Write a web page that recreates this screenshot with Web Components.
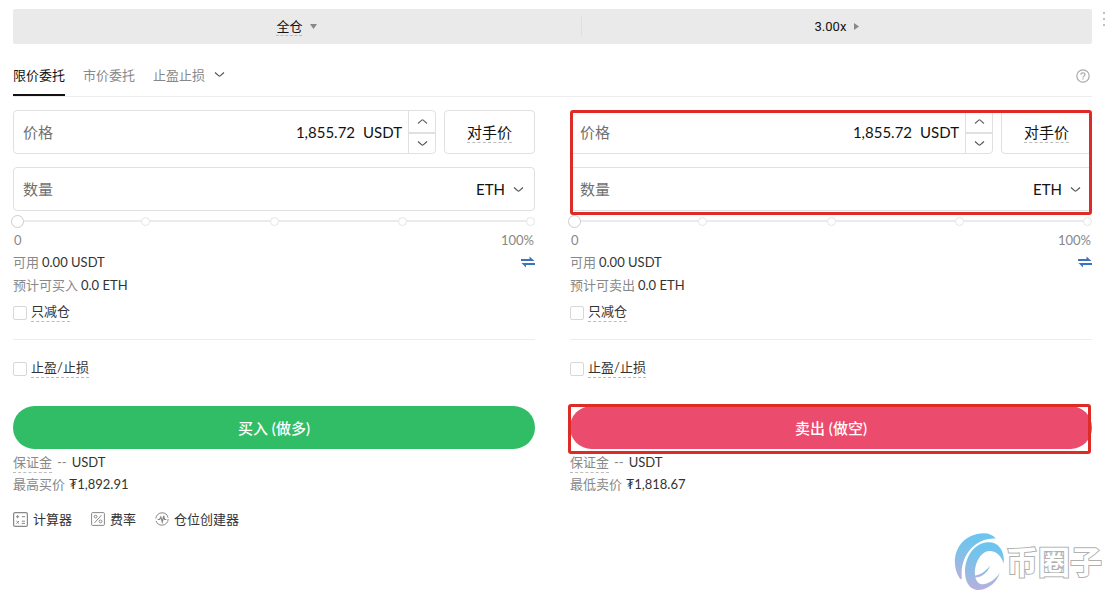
<!DOCTYPE html>
<html lang="zh-CN">
<head>
<meta charset="utf-8">
<title>限价委托</title>
<style>
body {
  margin: 0;
  min-height: 100vh;
  background: #fff;
  color: #121212;
  font-family: Lato, "Noto Sans CJK SC", sans-serif;
  font-size: 13px;
  line-height: 22px;
}
</style>
</head>
<body>
<trade-panel></trade-panel>

<script>
const baseStyle = `
* { box-sizing: border-box; }
button, input, select {
  margin: 0;
  padding: 0;
  border: 0;
  background: none;
  color: inherit;
  font: inherit;
  outline: none;
}
button, select { cursor: pointer; }
svg { display: block; flex: none; }
a { color: inherit; text-decoration: none; }
`;

const chevronDown = `<svg width="11" height="7" viewBox="0 0 11 7" fill="none" stroke="#555" stroke-width="1.2"><path d="M1 1.5L4.8 4.9Q5.5 5.5 6.2 4.9L10 1.5"/></svg>`;
const chevronUp = `<svg width="11" height="7" viewBox="0 0 11 7" fill="none" stroke="#666" stroke-width="1.2"><path d="M1 5.5L4.8 2.1Q5.5 1.5 6.2 2.1L10 5.5"/></svg>`;

// Red frame drawn over whatever is slotted in
class MarkFrame extends HTMLElement {
  constructor() {
    super();
    this.attachShadow({ mode: "open" });
  }

  connectedCallback() {
    this.shadowRoot.innerHTML = `
<style>
:host { display: block; position: relative; }
.frame {
  position: absolute;
  inset: var(--frame-inset, 0);
  border: 3px solid #dd2c26;
  border-radius: 3px;
  pointer-events: none;
}
</style>
<slot></slot>
<div class="frame"></div>
`;
  }
}

class MarginBar extends HTMLElement {
  constructor() {
    super();
    this.attachShadow({ mode: "open" });
  }

  connectedCallback() {
    this.shadowRoot.innerHTML = `
<style>
${baseStyle}
:host {
  display: grid;
  grid-template-columns: 10fr 9fr;
  padding: 8px 0 10px;
  height: 35px;
  background: #eaeaea;
  border-radius: 2px;
}
button {
  display: flex;
  align-items: center;
  justify-content: center;
  gap: 8px;
  line-height: 17px;
}
button + button { border-left: 1px solid #dfdfdf; font-family: Roboto, sans-serif; }
.mode { border-bottom: 1px dashed #bbb; line-height: 18px; }
</style>
<button type="button"><span class="mode">全仓</span><svg width="7" height="5" viewBox="0 0 7 5"><path d="M0 0H7L3.5 5Z" fill="#888"/></svg></button>
<button type="button"><span>3.00x</span><svg width="5" height="7" viewBox="0 0 5 7"><path d="M0 0L5 3.5L0 7Z" fill="#888"/></svg></button>
`;
  }
}

class OrderTabs extends HTMLElement {
  constructor() {
    super();
    this.attachShadow({ mode: "open" });
  }

  connectedCallback() {
    this.shadowRoot.innerHTML = `
<style>
${baseStyle}
:host {
  display: flex;
  align-items: stretch;
  gap: 18px;
  height: 42px;
  border-bottom: 1px solid #ededed;
}
button {
  display: flex;
  align-items: center;
  gap: 9px;
  padding-bottom: 2px;
  color: #888;
}
.active {
  color: #121212;
  box-shadow: inset 0 -2px #121212;
}
.help { margin-left: auto; padding: 0 2px 0 0; }
</style>
<button type="button" class="active">限价委托</button>
<button type="button">市价委托</button>
<button type="button">止盈止损 ${chevronDown}</button>
<button type="button" class="help" aria-label="帮助">
  <svg width="14" height="14" viewBox="0 0 14 14" fill="none" stroke="#aaa" stroke-width="1.2"><circle cx="7" cy="7" r="6.2"/><path d="M5 5.7C5 3.3 9 3.3 9 5.6C9 7 7 6.9 7 8.4M7 9.3V10.5"/></svg>
</button>
`;
  }
}

class PriceField extends HTMLElement {
  constructor() {
    super();
    this.attachShadow({ mode: "open" });
  }

  connectedCallback() {
    this.shadowRoot.innerHTML = `
<style>
${baseStyle}
:host { display: flex; gap: 8px; height: 44px; font-size: 15px; }
.box {
  flex: 1;
  min-width: 0;
  display: flex;
  align-items: center;
  border: 1px solid #e0e0e0;
  border-radius: 4px;
}
label { padding-left: 9px; color: #707070; }
input { flex: 1; min-width: 0; text-align: right; padding-right: 8px; }
.unit { padding-right: 6px; }
.steps {
  align-self: stretch;
  display: grid;
  grid-template-rows: 1fr 1fr;
  width: 27px;
  border-left: 1px solid #e0e0e0;
}
.steps button { display: grid; place-items: center; }
.steps button + button { border-top: 2px solid #e0e0e0; }
.match {
  width: 91px;
  border: 1px solid #e0e0e0;
  border-radius: 4px;
}
.match span { display: inline-block; line-height: 20px; border-bottom: 1px dashed #bbb; }
</style>
<div class="box">
  <label for="price">价格</label>
  <input id="price" type="text" value="${this.getAttribute("value")}">
  <span class="unit">USDT</span>
  <div class="steps">
    <button type="button" aria-label="增加">${chevronUp}</button>
    <button type="button" aria-label="减少">${chevronDown}</button>
  </div>
</div>
<button type="button" class="match"><span>对手价</span></button>
`;
  }
}

class AmountField extends HTMLElement {
  constructor() {
    super();
    this.attachShadow({ mode: "open" });
  }

  connectedCallback() {
    this.shadowRoot.innerHTML = `
<style>
${baseStyle}
:host {
  display: flex;
  align-items: center;
  height: 44px;
  padding: 0 10px 0 9px;
  border: 1px solid #e0e0e0;
  border-radius: 4px;
  font-size: 15px;
}
input { flex: 1; min-width: 0; }
input::placeholder { color: #707070; opacity: 1; }
select { appearance: none; padding-right: 8px; }
</style>
<input type="text" placeholder="数量" aria-label="数量">
<select aria-label="单位"><option>ETH</option></select>
${chevronDown}
`;
  }
}

class PercentSlider extends HTMLElement {
  constructor() {
    super();
    this.attachShadow({ mode: "open" });
  }

  connectedCallback() {
    this.shadowRoot.innerHTML = `
<style>
${baseStyle}
:host { display: block; color: #888; line-height: 19px; }
.track { display: grid; height: 20px; align-items: center; }
.track > * { grid-area: 1 / 1; }
.dots {
  display: flex;
  justify-content: space-between;
  background: linear-gradient(#ebebeb, #ebebeb) center / 100% 2px no-repeat;
}
.dots i {
  width: 9px;
  height: 9px;
  background: #fff;
  border: 1px solid #e6e6e6;
  border-radius: 50%;
}
input { appearance: none; height: 13px; margin: 0 -2px; }
input::-webkit-slider-thumb {
  appearance: none;
  width: 13px;
  height: 13px;
  background: #fff;
  border: 1px solid #ccc;
  border-radius: 50%;
}
.scale { display: flex; justify-content: space-between; padding: 0 1px; }
</style>
<div class="track">
  <div class="dots"><i></i><i></i><i></i><i></i><i></i></div>
  <input type="range" min="0" max="100" value="0" aria-label="比例">
</div>
<div class="scale"><span>0</span><span>100%</span></div>
`;
  }
}

class CheckOption extends HTMLElement {
  constructor() {
    super();
    this.attachShadow({ mode: "open" });
  }

  connectedCallback() {
    this.shadowRoot.innerHTML = `
<style>
${baseStyle}
:host { display: flex; }
label { display: flex; align-items: flex-end; gap: 4px; color: #333; }
input {
  appearance: none;
  width: 14px;
  height: 14px;
  margin-bottom: 2px;
  border: 1px solid #d8d8d8;
  border-radius: 2px;
}
span { border-bottom: 1px dashed #bbb; line-height: 20px; }
</style>
<label><input type="checkbox"><span><slot></slot></span></label>
`;
  }
}

class OrderForm extends HTMLElement {
  constructor() {
    super();
    this.attachShadow({ mode: "open" });
  }

  connectedCallback() {
    const fields = `
<div class="fields">
  <price-field value="1,855.72"></price-field>
  <amount-field></amount-field>
</div>`;
    const submit = `<button type="submit" class="submit">${this.getAttribute("action")}</button>`;
    const marked = this.hasAttribute("marked");

    this.shadowRoot.innerHTML = `
<style>
${baseStyle}
:host { display: block; min-width: 0; color: #333; --side: #31bd65; }
:host([side="sell"]) { --side: #eb4b6d; }
price-field, amount-field { color: #121212; }
.fields { display: grid; gap: 13px; }
.row { display: flex; align-items: center; gap: 3px; height: 23px; }
.row.wide { gap: 4px; height: 22px; }
.row.margin { gap: 5px; }
.label { color: #888; }
.dashed { border-bottom: 1px dashed #bbb; line-height: 20px; }
.transfer { margin-left: auto; }
check-option { margin: 5px 0 17px; }
hr { margin: 0 0 17px; border: 0; border-top: 1px solid #ededed; }
.submit {
  display: block;
  width: 100%;
  height: 43px;
  border-radius: 22px;
  background: var(--side);
  color: #fff;
  font-size: 15px;
  font-weight: 500;
}
.action { margin: 28px 0 2px; }
.fields-frame { --frame-inset: 0 0 -4px; }
.submit-frame { --frame-inset: -2px 1px -5px -2px; }
</style>
<form>
  ${marked ? `<mark-frame class="fields-frame">${fields}</mark-frame>` : fields}
  <percent-slider></percent-slider>
  <div class="row">
    <span class="label">可用</span><span>0.00 USDT</span>
    <button type="button" class="transfer" aria-label="划转">
      <svg width="14" height="12" viewBox="0 0 14 12"><path d="M0 3H8.5V0.5L13.5 5H0ZM14 7H0.5L5 11.5V9H14Z" fill="#3b74bd"/></svg>
    </button>
  </div>
  <div class="row"><span class="label">${this.getAttribute("estimate")}</span><span>0.0 ETH</span></div>
  <check-option>只减仓</check-option>
  <hr>
  <check-option>止盈/止损</check-option>
  <div class="action">${marked ? `<mark-frame class="submit-frame">${submit}</mark-frame>` : submit}</div>
  <div class="row wide margin"><span class="label dashed">保证金</span><span class="label">--</span><span>USDT</span></div>
  <div class="row wide"><span class="label">${this.getAttribute("limit-label")}</span><span>${this.getAttribute("limit")}</span></div>
</form>
`;
  }
}

class ToolLinks extends HTMLElement {
  constructor() {
    super();
    this.attachShadow({ mode: "open" });
  }

  connectedCallback() {
    this.shadowRoot.innerHTML = `
<style>
${baseStyle}
:host { display: flex; gap: 19px; color: #333; }
a { display: flex; align-items: center; gap: 5px; }
svg { fill: none; stroke: #888; }
</style>
<a href="#calculator">
  <svg width="15" height="15" viewBox="0 0 15 15"><rect x=".6" y=".6" width="13.8" height="13.8" rx="1.5" stroke-width="1.2"/><path d="M3 4.7H6.2M4.6 3.1V6.3M8.8 4.7H12M3.4 9L6 11.6M6 9L3.4 11.6M8.8 9.2H12M8.8 11.4H12"/></svg>
  计算器
</a>
<a href="#fees">
  <svg width="14" height="14" viewBox="0 0 14 14"><rect x=".6" y=".6" width="12.8" height="12.8" rx="1"/><path d="M10.4 3.2L3.6 10.8"/><circle cx="4.6" cy="4.6" r="1.4"/><circle cx="9.5" cy="9.4" r="1.4"/></svg>
  费率
</a>
<a href="#position-builder">
  <svg width="14" height="14" viewBox="0 0 14 14"><circle cx="7" cy="7" r="6.2" stroke-dasharray="17 2.5"/><path d="M2.6 7.5H4.5L5.8 5L7.3 10L8.7 4L9.6 7.5H11.4" stroke-width="1.2"/></svg>
  仓位创建器
</a>
`;
  }
}

class SiteMark extends HTMLElement {
  constructor() {
    super();
    this.attachShadow({ mode: "open" });
  }

  connectedCallback() {
    this.shadowRoot.innerHTML = `
<style>
${baseStyle}
:host {
  position: absolute;
  right: 3px;
  bottom: 0;
  display: flex;
  align-items: center;
  font-size: 32px;
  font-weight: 700;
  line-height: 57px;
  color: #fff;
  -webkit-text-stroke: 2px #b0b0b0;
  paint-order: stroke fill;
}
</style>
<svg width="52" height="57" viewBox="75 428 156 172">
  <defs>
    <linearGradient id="shade" x1="0" y1="0" x2="0" y2="1"><stop offset="0" stop-color="#68c6f0"/><stop offset=".4" stop-color="#7fc0e8"/><stop offset="1" stop-color="#b7b1dc"/></linearGradient>
  </defs>
  <g fill="url(#shade)">
    <path d="M92 565C60 520 78 432 165 429C180 429 193 435 201 445C140 441 92 495 98 563C98 568 95 569 92 565Z"/>
    <path d="M224 520C230 480 205 450 170 457C125 464 100 520 110 565C116 588 130 600 150 600C180 598 205 575 213 548C196 575 162 592 147 577C131 561 136 520 155 497C175 470 214 482 224 520Z"/>
    <path d="M138 562C157 562 176 548 184 525C171 543 154 555 137 556Z"/>
  </g>
</svg>
<span>币圈子</span>
`;
  }
}

class TradePanel extends HTMLElement {
  constructor() {
    super();
    this.attachShadow({ mode: "open" });
  }

  connectedCallback() {
    this.shadowRoot.innerHTML = `
<style>
${baseStyle}
:host {
  display: block;
  position: relative;
  min-height: 100vh;
  padding: 9px 13px 0;
  overflow: hidden;
  box-sizing: border-box;
}
order-tabs { margin: 11px 0 13px; }
.forms { display: grid; grid-template-columns: 1fr 1fr; gap: 35px; }
tool-links { margin-top: 13px; }
.more { position: absolute; top: 11px; right: 0; }
</style>
<margin-bar></margin-bar>
<order-tabs></order-tabs>
<div class="forms">
  <order-form side="buy" action="买入 (做多)" estimate="预计可买入" limit-label="最高买价" limit="₮1,892.91"></order-form>
  <order-form side="sell" marked action="卖出 (做空)" estimate="预计可卖出" limit-label="最低卖价" limit="₮1,818.67"></order-form>
</div>
<tool-links></tool-links>
<button type="button" class="more" aria-label="更多"><svg width="2" height="16" viewBox="0 0 2 16" fill="#aaa"><circle cx="1" cy="2" r="1"/><circle cx="1" cy="8" r="1"/><circle cx="1" cy="14" r="1"/></svg></button>
<site-mark></site-mark>
`;
  }
}

customElements.define("mark-frame", MarkFrame);
customElements.define("margin-bar", MarginBar);
customElements.define("order-tabs", OrderTabs);
customElements.define("price-field", PriceField);
customElements.define("amount-field", AmountField);
customElements.define("percent-slider", PercentSlider);
customElements.define("check-option", CheckOption);
customElements.define("order-form", OrderForm);
customElements.define("tool-links", ToolLinks);
customElements.define("site-mark", SiteMark);
customElements.define("trade-panel", TradePanel);
</script>
</body>
</html>
